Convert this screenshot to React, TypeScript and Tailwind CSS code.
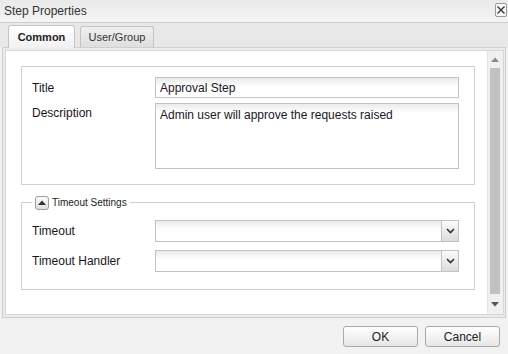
import React from "react";

const font = { fontFamily: '"Liberation Sans", Arial, sans-serif' };

function Chevron() {
  return (
    <svg width="9" height="6" viewBox="0 0 9 6">
      <path d="M1 1 L4.5 4.5 L8 1" stroke="#333" strokeWidth="1.6" fill="none" />
    </svg>
  );
}

function Select() {
  return (
    <div className="flex h-[22px] w-[304px] border border-[#c2c2c2] bg-[linear-gradient(#e9ecec,#ffffff_9px)]">
      <div className="flex-1" />
      <div className="flex w-[17px] items-center justify-center border-l border-[#c2c2c2] bg-[linear-gradient(#fbfbfb,#dcdcdc)]">
        <Chevron />
      </div>
    </div>
  );
}

export default function App() {
  return (
    <div
      className="flex h-[354px] w-[508px] flex-col overflow-hidden bg-[#f2f2f2] text-[12px] text-[#1c1424]"
      style={font}
    >
      {/* Header */}
      <div className="flex h-[23px] items-center justify-between border-b border-[#cdcdcd] bg-[linear-gradient(#eaeaea,#f4f4f4)] pl-[4px] pr-[1px]">
        <span className="text-[12px] text-[#333]">Step Properties</span>
        <div className="mb-[2px] flex h-[14px] w-[12px] items-center justify-center rounded-[2px] border border-[#9a9a9a] bg-[#f6f6f6]">
          <svg width="8" height="8" viewBox="0 0 8 8">
            <path d="M0.5 0.5 L7.5 7.5 M7.5 0.5 L0.5 7.5" stroke="#333" strokeWidth="1.3" />
          </svg>
        </div>
      </div>

      {/* Tabs */}
      <div className="flex h-[24px] items-end gap-[5px] bg-[#e8e8e8] pl-[8px]">
        <div className="relative z-10 -mb-[1px] flex h-[23px] w-[67px] items-center justify-center rounded-t-[3px] border border-b-0 border-[#c4c4c4] bg-[linear-gradient(#ffffff,#f1f1f1)] text-[11px] font-bold text-[#222]">
          Common
        </div>
        <div className="flex h-[21px] w-[74px] items-center justify-center rounded-t-[3px] border border-b-0 border-[#c4c4c4] bg-[linear-gradient(#f0f0f0,#dedede)] text-[11px] text-[#333]">
          User/Group
        </div>
      </div>

      {/* Panel */}
      <div className="mx-[2px] flex h-[271px] w-[504px] border border-[#cfcfcf] bg-[#ececec] p-[2px]">
        <div className="flex flex-1 border border-[#d6d6d6] bg-white">
          <div className="flex-1 pl-[15px] pr-[12px] pt-[15px]">
            {/* Fieldset 1 */}
            <div className="flex flex-col gap-[5px] border border-[#cfcfcf] pb-[15px] pl-[10px] pr-[15px] pt-[10px]">
              <div className="flex items-center">
                <div className="w-[123px]">Title</div>
                <div className="flex h-[21px] w-[304px] items-center border border-[#c2c2c2] bg-[linear-gradient(#e9ecec,#ffffff_9px)] px-[4px]">
                  Approval Step
                </div>
              </div>
              <div className="flex items-start">
                <div className="w-[123px] pt-[1px]">Description</div>
                <div className="h-[66px] w-[304px] border border-[#c2c2c2] bg-[linear-gradient(#e9ecec,#ffffff_9px)] px-[4px] pt-[2px]">
                  Admin user will approve the requests raised
                </div>
              </div>
            </div>

            {/* Fieldset 2 */}
            <fieldset className="mt-[10px] border border-[#cfcfcf] pb-[17px] pl-[10px] pr-[15px] pt-[10px]">
              <legend className="flex items-center gap-[3px] px-[3px]">
                <span className="flex h-[14px] w-[14px] items-center justify-center rounded-[3px] border border-[#9d9d9d] bg-[linear-gradient(#fafafa,#e0e0e0)]">
                  <svg width="8" height="5" viewBox="0 0 8 5">
                    <path d="M0 5 L4 0.5 L8 5 Z" fill="#333" />
                  </svg>
                </span>
                <span className="text-[10px] text-[#222]">Timeout Settings</span>
              </legend>
              <div className="flex flex-col gap-[8px]">
                <div className="flex items-center">
                  <div className="w-[123px]">Timeout</div>
                  <Select />
                </div>
                <div className="flex items-center">
                  <div className="w-[123px]">Timeout Handler</div>
                  <Select />
                </div>
              </div>
            </fieldset>
          </div>

          {/* Scrollbar */}
          <div className="flex w-[16px] flex-col border-l border-[#e4e4e4] bg-[#f0f0f0] pr-[1px]">
            <div className="flex h-[17px] items-center justify-center">
              <svg width="8" height="5" viewBox="0 0 8 5">
                <path d="M0 5 L4 0.5 L8 5 Z" fill="#8a8a8a" />
              </svg>
            </div>
            <div className="mx-[2px] flex-1 bg-[#c1c1c1]" />
            <div className="flex h-[20px] items-center justify-center">
              <svg width="8" height="5" viewBox="0 0 8 5">
                <path d="M0 0 L8 0 L4 4.5 Z" fill="#555" />
              </svg>
            </div>
          </div>
        </div>
      </div>

      {/* Footer */}
      <div className="flex flex-1 items-center justify-end gap-[7px] pr-[8px] pt-[1px]">
        <button className="flex h-[21px] w-[75px] items-center justify-center rounded-[3px] border border-[#a9a9a9] bg-[linear-gradient(#ffffff,#e6e6e6)] text-[12px] text-[#222]">
          OK
        </button>
        <button className="flex h-[21px] w-[75px] items-center justify-center rounded-[3px] border border-[#a9a9a9] bg-[linear-gradient(#ffffff,#e6e6e6)] text-[12px] text-[#222]">
          Cancel
        </button>
      </div>
    </div>
  );
}
